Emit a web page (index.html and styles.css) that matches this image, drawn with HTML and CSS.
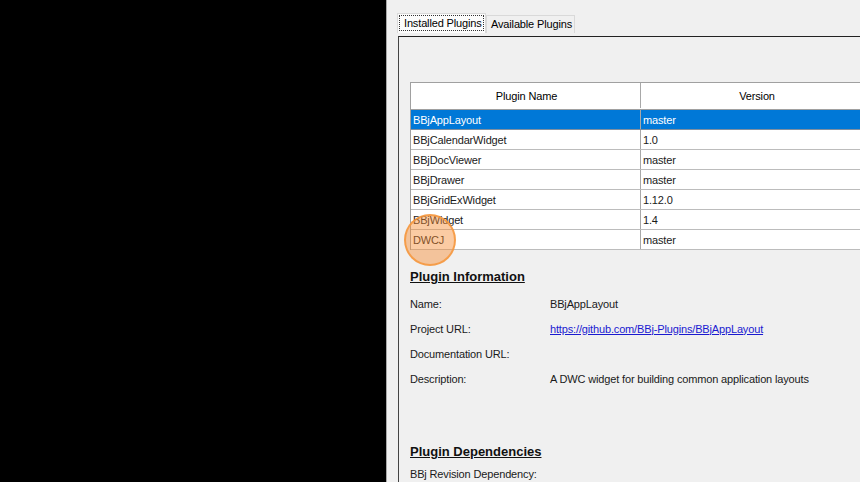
FILE: index.html
```html
<!DOCTYPE html>
<html>
<head>
<meta charset="utf-8">
<link rel="stylesheet" href="styles.css">
</head>
<body>
<div class="screen">
  <div class="black"></div>
  <div class="panel">
    <div class="tabs">
      <div class="tab active"><span class="focus">Installed Plugins</span></div>
      <div class="tab">Available Plugins</div>
    </div>
    <div class="page">
      <div class="table">
        <div class="row head">
          <div class="cell c1">Plugin Name</div>
          <div class="cell c2">Version</div>
        </div>
        <div class="row sel">
          <div class="cell c1">BBjAppLayout</div>
          <div class="cell c2">master</div>
        </div>
        <div class="row">
          <div class="cell c1">BBjCalendarWidget</div>
          <div class="cell c2">1.0</div>
        </div>
        <div class="row">
          <div class="cell c1">BBjDocViewer</div>
          <div class="cell c2">master</div>
        </div>
        <div class="row">
          <div class="cell c1">BBjDrawer</div>
          <div class="cell c2">master</div>
        </div>
        <div class="row">
          <div class="cell c1">BBjGridExWidget</div>
          <div class="cell c2">1.12.0</div>
        </div>
        <div class="row">
          <div class="cell c1">BBjWidget</div>
          <div class="cell c2">1.4</div>
        </div>
        <div class="row">
          <div class="cell c1">DWCJ</div>
          <div class="cell c2">master</div>
        </div>
      </div>

      <h2 class="heading">Plugin Information</h2>
      <div class="info">
        <div class="label">Name:</div><div class="value">BBjAppLayout</div>
        <div class="label">Project URL:</div><div class="value"><a class="link" href="#">https://github.com/BBj-Plugins/BBjAppLayout</a></div>
        <div class="label">Documentation URL:</div><div class="value"></div>
        <div class="label">Description:</div><div class="value">A DWC widget for building common application layouts</div>
      </div>

      <h2 class="heading deps">Plugin Dependencies</h2>
      <div class="info">
        <div class="label wide">BBj Revision Dependency:</div>
      </div>
    </div>
  </div>
  <div class="click"></div>
</div>
</body>
</html>
```

FILE: styles.css
```css
html, body {
  margin: 0;
  padding: 0;
  background: #000;
  overflow: hidden;
}
.screen {
  position: relative;
  width: 860px;
  height: 482px;
  display: flex;
  overflow: hidden;
  font-family: "Liberation Sans", Arial, sans-serif;
  font-size: 11px;
  letter-spacing: -0.15px;
  color: #1a1a1a;
}
.black {
  width: 386px;
  flex: none;
  background: #000;
}
.panel {
  flex: 1;
  background: #f0f0f0;
  border-left: 1px solid #a8a8a8;
  padding: 13px 0 0 10px;
  overflow: hidden;
}
.tabs {
  display: flex;
  align-items: flex-end;
  height: 20px;
}
.tab {
  box-sizing: border-box;
  height: 18px;
  line-height: 16px;
  padding: 0 3px 0 4px;
  border: 1px solid #d9d9d9;
  border-bottom: none;
  background: #f0f0f0;
  color: #000;
  white-space: nowrap;
}
.tab.active {
  height: 20px;
  width: 89px;
  padding: 1px;
  background: #fcfcfc;
}
.tab.active .focus {
  display: block;
  height: 16px;
  line-height: 15px;
  padding-left: 4px;
  border: 1px dotted #333;
  box-sizing: border-box;
}
.tab + .tab { width: 89px; }
.page {
  margin: 3px 0 0 1px;
  border-top: 1px solid #222;
  border-left: 1px solid #444;
  padding: 45px 0 0 11px;
  height: 500px;
}
.table {
  width: 460px;
  border-top: 1px solid #a0a0a0;
  border-left: 1px solid #a0a0a0;
  background: #fff;
}
.row {
  display: flex;
  height: 20px;
  border-bottom: 1px solid #bcbcbc;
  box-sizing: border-box;
}
.row.head {
  height: 27px;
  border-bottom: 1px solid #a0a0a0;
  padding-bottom: 1px;
}
.row.head .cell {
  justify-content: center;
  color: #000;
}
.cell {
  display: flex;
  align-items: center;
  padding-left: 2px;
  white-space: nowrap;
  box-sizing: border-box;
}
.c1 { width: 230px; border-right: 1px solid #a8a8a8; }
.c2 { flex: 1; }
.row.sel { background: #0078d7; color: #fff; border-bottom-color: #7f8fa0; }
.heading {
  margin: 19px 0 6px 0;
  font-size: 13px;
  font-weight: bold;
  line-height: 16px;
  height: 16px;
  text-decoration: underline;
  letter-spacing: 0;
  color: #111;
}
.heading.deps { margin-top: 53px; margin-bottom: 1px; }
.info {
  display: grid;
  grid-template-columns: 140px 1fr;
  grid-auto-rows: 25px;
  align-items: center;
}
.label { color: #1a1a1a; }
.label.wide { grid-column: 1 / 3; }
.link { color: #1a1ad0; text-decoration: underline; }
.click {
  position: absolute;
  left: 404px;
  top: 214px;
  width: 52px;
  height: 52px;
  border-radius: 50%;
  background: rgba(246, 140, 50, 0.45);
  border: 2px solid rgba(246, 150, 60, 0.85);
  box-sizing: border-box;
}
```
